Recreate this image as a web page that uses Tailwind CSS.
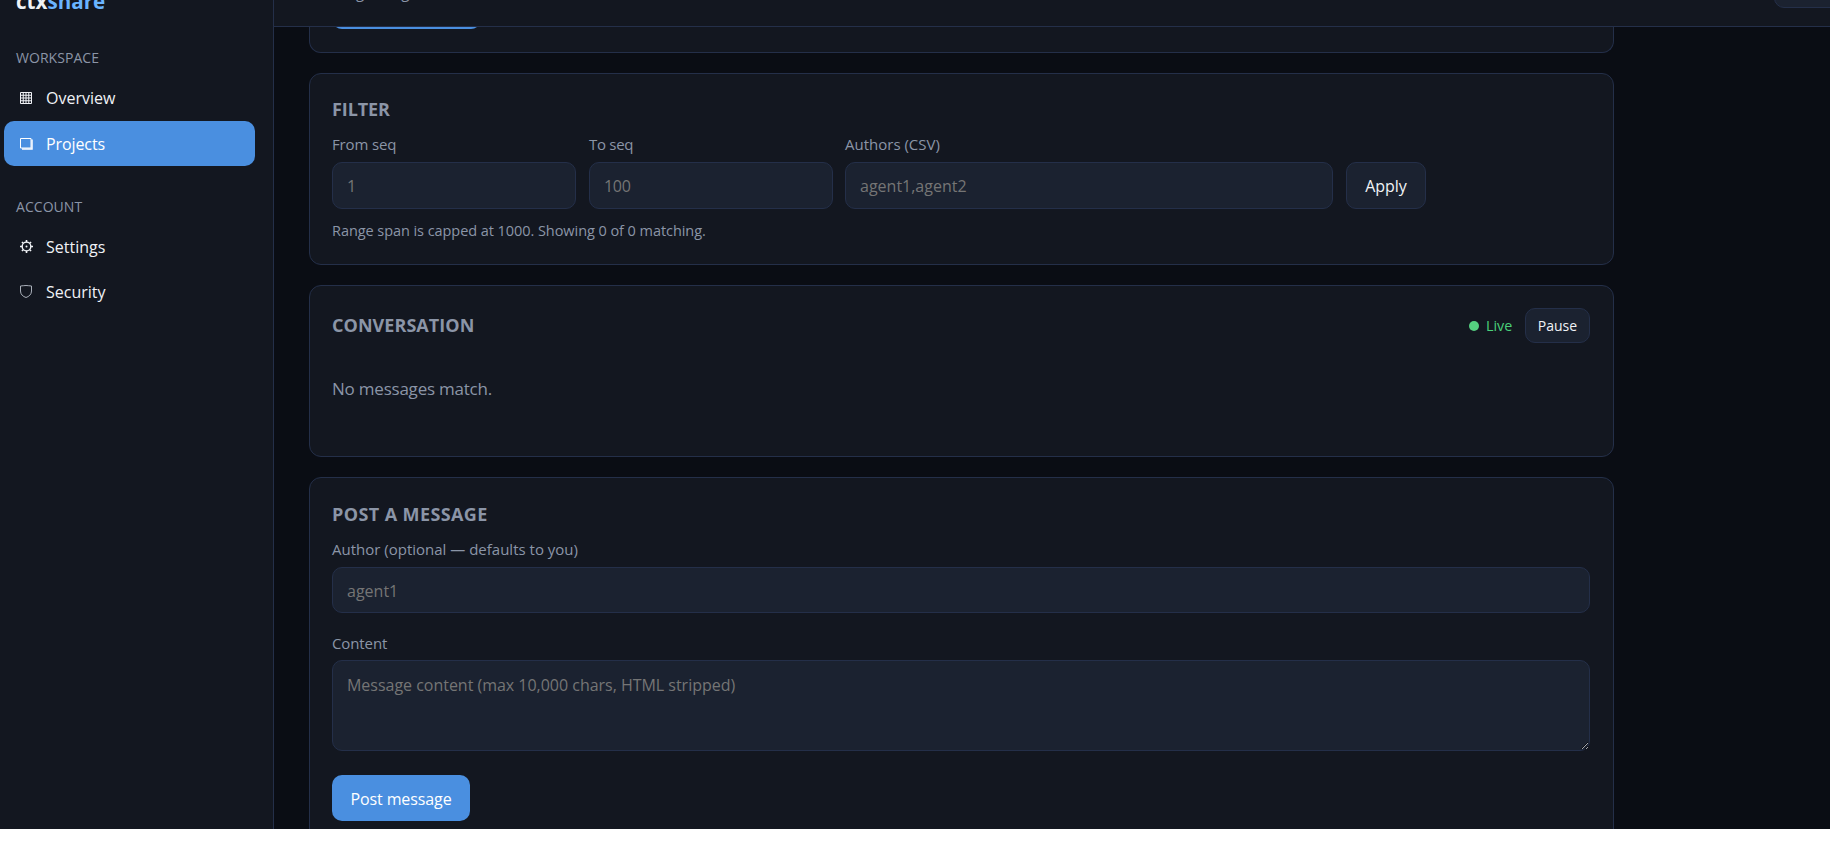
<!DOCTYPE html>
<html lang="en">
<head>
  <meta charset="UTF-8">
  <meta name="viewport" content="width=device-width, initial-scale=1">
  <title>ctxshare</title>
  <script src="https://cdn.jsdelivr.net/npm/@tailwindcss/browser@4"></script>
</head>
<body class="bg-white font-['Open_Sans',sans-serif]">

<div class="flex w-[1830px] h-[829px] overflow-hidden bg-[#0a0d14] text-[#f0f2f6]">

  <!-- Sidebar -->
  <aside class="w-[274px] shrink-0 bg-[#131720] border-r border-[#242f49]">
    <div class="-mt-[14px] h-[30px] pl-4 text-[20.6px] leading-[30px] font-bold">ctx<span class="text-[#6ab4ff]">share</span></div>

    <div class="mt-[32px] pl-4 text-[14px] leading-5 tracking-[0.05px] text-[#8b95a7]">WORKSPACE</div>
    <nav class="mt-[7px] ml-1 w-[251px] text-[16px]">
      <a href="#" class="flex items-center gap-[14px] h-[46px] pl-4 rounded-[10px]">
        <svg class="size-3" viewBox="0 0 12 12" fill="none" stroke="currentColor"><path d="M.5 .5h11v11H.5zM3.25 .5v11M6 .5v11M8.75 .5v11M.5 3.25h11M.5 6h11M.5 8.75h11"/></svg>
        <span>Overview</span>
      </a>
      <a href="#" class="flex items-center gap-[14px] h-[45px] pl-4 rounded-[10px] bg-[#4a8fe0] text-white">
        <svg class="w-[13px] h-3 -mr-px" viewBox="0 0 13 12" fill="none" stroke="currentColor"><path d="M.5 .5h10.5v9.5H.5z"/><path stroke-width="1.5" d="M2 11h10V1.5"/></svg>
        <span class="tracking-[-0.1px]">Projects</span>
      </a>
    </nav>

    <div class="mt-[31px] pl-4 text-[14px] leading-5 tracking-[0.05px] text-[#8b95a7]">ACCOUNT</div>
    <nav class="mt-[7px] ml-1 w-[251px] text-[16px]">
      <a href="#" class="flex items-center gap-[14px] h-[45px] pl-4 rounded-[10px]">
        <svg class="size-[13px] -mr-px" viewBox="0 0 12 12" fill="none" stroke="currentColor"><circle cx="6" cy="6" r="4" stroke-width="1.3"/><circle cx="6" cy="6" r=".9" fill="currentColor" stroke="none"/><path stroke-width="1.5" d="M6 0v2M6 10v2M0 6h2M10 6h2M1.8 1.8l1.2 1.2M9 9l1.2 1.2M1.8 10.2L3 9M9 3l1.2-1.2"/></svg>
        <span>Settings</span>
      </a>
      <a href="#" class="flex items-center gap-[14px] h-[45px] pl-4 rounded-[10px]">
        <svg class="w-3 h-[13px]" viewBox="0 0 12 13" fill="none" stroke="#a9afb9"><path d="M.5 1C2.5 .4 4 1 6 .5c2 .5 3.500 -.1 5.500 .5v5c0 3.500-2.500 5.500-5.500 6.500C3 11.500 .5 9.500 .5 6z"/></svg>
        <span>Security</span>
      </a>
    </nav>
  </aside>

  <!-- Main column -->
  <div class="flex-1 min-w-0">

    <!-- Top bar -->
    <header class="flex justify-between h-[27px] overflow-hidden bg-[#131720] border-b border-[#242f49]">
      <div class="flex gap-[37px] -mt-[18px] pl-[82px] text-[15px] leading-5 text-[#8b95a7]"><span>g</span><span>g</span></div>
      <button class="-mt-[38px] -mr-6 h-[46px] w-20 rounded-[10px] bg-[#1b2230] border border-[#242f49]"></button>
    </header>

    <main class="pl-[35px] w-[1340px]">

      <div class="h-[26px] overflow-hidden rounded-b-xl bg-[#131720] border border-t-0 border-[#242f49] pl-[22px]">
        <button class="block -mt-[44px] h-[46px] w-[149px] rounded-[10px] bg-[#4a8fe0]"></button>
      </div>

      <!-- Filter -->
      <section class="mt-5 h-[192px] rounded-xl bg-[#131720] border border-[#242f49] pt-[23px] pl-[22px] pr-[23px]">
        <h2 class="text-[18px] leading-6 font-bold tracking-[-0.1px] text-[#8b95a7]">FILTER</h2>
        <form class="mt-[13px] flex items-end gap-[13px]">
          <label class="w-[244px] text-[15px] leading-5 tracking-[-0.15px] text-[#8b95a7]">From seq
            <input type="text" placeholder="1" class="block mt-2 w-full h-[47px] rounded-[10px] bg-[#1b2230] border border-[#242f49] px-[14px] text-[16px] placeholder:text-[#757575]">
          </label>
          <label class="w-[244px] text-[15px] leading-5 tracking-[-0.3px] text-[#8b95a7]">To seq
            <input type="text" placeholder="100" class="block mt-2 w-full h-[47px] rounded-[10px] bg-[#1b2230] border border-[#242f49] px-[14px] text-[16px] placeholder:text-[#757575]">
          </label>
          <label class="w-[488px] -ml-px text-[15px] leading-5 text-[#8b95a7]">Authors (CSV)
            <input type="text" placeholder="agent1,agent2" class="block mt-2 w-full h-[47px] rounded-[10px] bg-[#1b2230] border border-[#242f49] px-[14px] text-[16px] placeholder:text-[#757575]">
          </label>
          <button type="button" class="h-[47px] w-20 rounded-[10px] bg-[#1b2230] border border-[#242f49] text-[16px]">Apply</button>
        </form>
        <p class="mt-3 text-[14.5px] leading-5 tracking-[-0.06px] text-[#8b95a7]">Range span is capped at 1000. Showing 0 of 0 matching.</p>
      </section>

      <!-- Conversation -->
      <section class="mt-5 h-[172px] rounded-xl bg-[#131720] border border-[#242f49] pt-[22px] pl-[22px] pr-[23px]">
        <div class="flex items-center h-[35px]">
          <h2 class="pb-[2px] text-[18px] leading-6 font-bold tracking-[0.05px] text-[#8b95a7]">CONVERSATION</h2>
          <span class="ml-auto size-[10px] rounded-full bg-[#55d080]"></span>
          <span class="ml-[7px] w-[26px] whitespace-nowrap text-[14.3px] text-[#4ad07a]">Live</span>
          <button class="ml-[13px] h-[35px] w-[65px] rounded-[10px] bg-[#1b2230] border border-[#242f49] text-[14px]">Pause</button>
        </div>
        <p class="mt-[34px] text-[17px] leading-6 tracking-[-0.22px] text-[#8b95a7]">No messages match.</p>
      </section>

      <!-- Post a message -->
      <section class="mt-5 h-[400px] rounded-xl bg-[#131720] border border-[#242f49] pt-[24px] pl-[22px] pr-[23px]">
        <h2 class="text-[18px] leading-6 font-bold tracking-[0.4px] text-[#8b95a7]">POST A MESSAGE</h2>
        <form>
          <label class="block mt-[13px] text-[15px] leading-5 text-[#8b95a7]">Author (optional — defaults to you)
            <input type="text" placeholder="agent1" class="block mt-2 w-full h-[46px] rounded-[10px] bg-[#1b2230] border border-[#242f49] px-[14px] pt-[2px] text-[16px] placeholder:text-[#757575]">
          </label>
          <label class="block mt-5 text-[15px] leading-5 tracking-[-0.1px] text-[#8b95a7]">Content
            <textarea placeholder="Message content (max 10,000 chars, HTML stripped)" class="block mt-[7px] w-full h-[91px] rounded-[10px] bg-[#1b2230] border border-[#242f49] px-[14px] pt-[12px] text-[16px] leading-6 tracking-[-0.02px] placeholder:text-[#757575]"></textarea>
          </label>
          <button type="button" class="mt-6 h-[46px] w-[138px] rounded-[10px] bg-[#4a8fe0] pt-[2px] text-white text-[16px] tracking-[-0.1px]">Post message</button>
        </form>
      </section>

    </main>
  </div>
</div>

</body>
</html>
